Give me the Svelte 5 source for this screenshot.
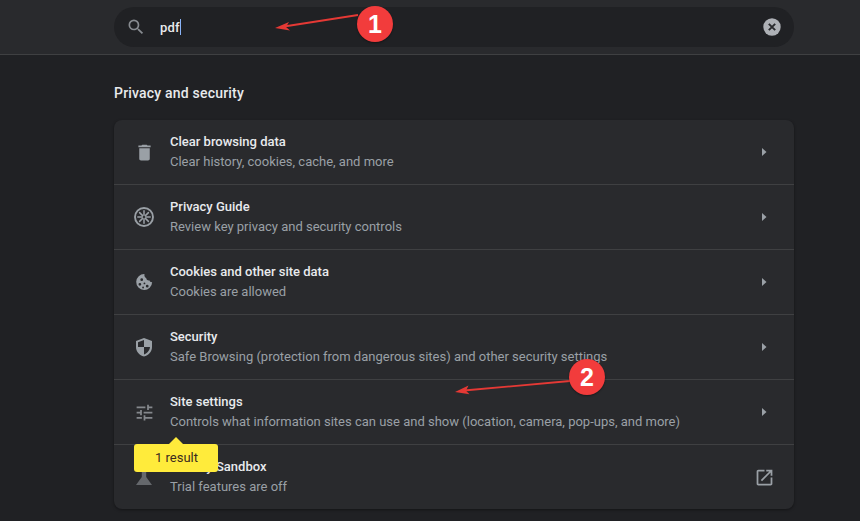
<script>
  const rows = [
    { icon: 'trash', title: 'Clear browsing data', sub: 'Clear history, cookies, cache, and more' },
    { icon: 'guide', title: 'Privacy Guide', sub: 'Review key privacy and security controls' },
    { icon: 'cookie', title: 'Cookies and other site data', sub: 'Cookies are allowed' },
    { icon: 'shield', title: 'Security', sub: 'Safe Browsing (protection from dangerous sites) and other security settings' },
    { icon: 'tune', title: 'Site settings', sub: 'Controls what information sites can use and show (location, camera, pop-ups, and more)' },
    { icon: 'flask', title: 'Privacy Sandbox', sub: 'Trial features are off', external: true }
  ];
</script>

<div class="page">
  <header class="top">
    <div class="search">
      <svg class="search-icon" viewBox="0 0 24 24" width="20" height="20">
        <path fill="#878b90" d="M15.5 14h-.79l-.28-.27A6.47 6.47 0 0 0 16 9.5 6.5 6.5 0 1 0 9.5 16c1.61 0 3.09-.59 4.23-1.57l.27.28v.79l5 4.99L20.49 19l-4.99-5zm-6 0C7.01 14 5 11.99 5 9.5S7.01 5 9.5 5 14 7.01 14 9.5 11.99 14 9.5 14z"/>
      </svg>
      <span class="query">pdf</span><span class="caret"></span>
      <svg class="clear" viewBox="0 0 18 18" width="18" height="18">
        <circle cx="9" cy="9" r="8.700" fill="#aeb1b6"/>
        <path d="M5.800 5.800l6.400 6.400M12.200 5.800l-6.400 6.400" stroke="#292a2d" stroke-width="1.900"/>
      </svg>
    </div>
  </header>

  <main class="content">
    <h2>Privacy and security</h2>
    <section class="card">
      {#each rows as row}
        <div class="row">
          <div class="icon">
            {#if row.icon === 'trash'}
              <svg viewBox="0 0 24 24" width="21" height="21"><path fill="#9aa0a6" d="M6 19c0 1.100.9 2 2 2h8c1.100 0 2-.9 2-2V7H6v12zM19 4h-3.500l-1-1h-5l-1 1H5v2h14V4z"/></svg>
            {:else if row.icon === 'guide'}
              <svg viewBox="0 0 24 24" width="24" height="24">
                <circle cx="12" cy="12" r="9" fill="none" stroke="#9aa0a6" stroke-width="1.900"/>
                <path stroke="#9aa0a6" stroke-width="1.500" stroke-linecap="round" d="M12 5.800v4.200M12 14v4.200M5.800 12H10M14 12h4.200M7.600 7.600l3 3M13.400 13.400l3 3M16.400 7.600l-3 3M10.600 13.400l-3 3"/>
              </svg>
            {:else if row.icon === 'cookie'}
              <svg viewBox="0 0 24 24" width="22" height="22">
                <path fill="#9aa0a6" fill-rule="evenodd" d="M12.500 3.300a8.700 8.700 0 1 0 8.400 8.800c-1.600.4-2.700-.4-3.100-1.900-1.900.3-3.300-.8-3.400-2.600-1.500-.2-2.300-2.600-1.900-4.300zM9.500 8a1.500 1.500 0 1 1 0 3 1.500 1.500 0 0 1 0-3zM7.500 13a1.500 1.500 0 1 1 0 3 1.500 1.500 0 0 1 0-3zM12.500 12.500a1 1 0 1 1 0 2 1 1 0 0 1 0-2zM15.500 15a1.500 1.500 0 1 1 0 3 1.500 1.500 0 0 1 0-3zM11 17a1 1 0 1 1 0 2 1 1 0 0 1 0-2z"/>
              </svg>
            {:else if row.icon === 'shield'}
              <svg viewBox="0 0 24 24" width="24" height="24">
                <path fill="#9aa0a6" fill-rule="evenodd" d="M12 3l-8 3v6c0 4.600 3.400 8.300 8 9.500 4.600-1.200 8-4.900 8-9.500V6l-8-3zm0 9h6c-.3 3.400-2.700 6.300-6 7.400V12H6V7.300l6-2.200V12z"/>
              </svg>
            {:else if row.icon === 'tune'}
              <svg viewBox="0 0 24 24" width="21" height="21"><path fill="#85888d" d="M3 17v2h6v-2H3zM3 5v2h10V5H3zm10 16v-2h8v-2h-8v-2h-2v6h2zM7 9v2H3v2h4v2h2V9H7zm14 4v-2H11v2h10zm-6-4h2V7h4V5h-4V3h-2v6z"/></svg>
            {:else}
              <svg viewBox="0 0 24 24" width="24" height="24"><path fill="#65686c" d="M9.800 5h4.400v7L20 20H4l5.800-8z"/></svg>
            {/if}
          </div>
          <div class="text">
            <div class="title">{row.title}</div>
            <div class="sub">{row.sub}</div>
          </div>
          <div class="end">
            {#if row.external}
              <svg viewBox="0 0 24 24" width="21" height="21"><path fill="#9aa0a6" d="M19 19H5V5h7V3H5c-1.110 0-2 .9-2 2v14c0 1.100.89 2 2 2h14c1.100 0 2-.9 2-2v-7h-2v7zM14 3v2h3.590l-9.830 9.830 1.410 1.410L19 6.410V10h2V3h-7z"/></svg>
            {:else}
              <svg viewBox="0 0 24 24" width="24" height="24"><path fill="#9aa0a6" d="M10 8l4.500 4-4.500 4z"/></svg>
            {/if}
          </div>
        </div>
      {/each}
    </section>
  </main>

  <div class="bubble">1 result</div>

  <svg class="marks" width="860" height="521" viewBox="0 0 860 521">
    <path d="M358 15L284 26.500" stroke="#e53935" stroke-width="1.800"/>
    <path d="M275 28l14-6-3 5 4 3.500z" fill="#e53935"/>
    <path d="M570 381L464 390.500" stroke="#e53935" stroke-width="1.800"/>
    <path d="M455 392l13.500-6.500-2.500 5.200 3.500 3.600z" fill="#e53935"/>
  </svg>
  <div class="num one">1</div>
  <div class="num two">2</div>
</div>

<style>
  :global(body) {
    margin: 0;
    background: #202124;
  }

  .page {
    position: relative;
    width: 860px;
    height: 521px;
    overflow: hidden;
    background: #202124;
    font-family: Roboto, "Liberation Sans", sans-serif;
    color: #e8eaed;
  }

  .top {
    box-sizing: border-box;
    height: 55px;
    padding: 7px 66px 0 114px;
    background: #292a2d;
    border-bottom: 1px solid #3f4042;
  }

  .search {
    display: flex;
    align-items: center;
    height: 40px;
    padding: 0 13px 0 12px;
    border-radius: 20px;
    background: #202124;
  }

  .search-icon {
    margin-right: 14px;
  }

  .query {
    font-size: 13px;
    font-weight: 500;
    letter-spacing: 0.2px;
  }

  .caret {
    width: 1px;
    height: 16px;
    background: #8ab4f8;
  }

  .clear {
    margin-left: auto;
  }

  .content {
    padding: 0 66px 0 114px;
  }

  h2 {
    margin: 0;
    padding: 30px 0 18px;
    font-size: 14px;
    line-height: 17px;
    font-weight: 500;
    letter-spacing: 0.2px;
    color: #e8eaed;
  }

  .card {
    border-radius: 8px;
    background: #292a2d;
    box-shadow: 0 1px 3px rgba(0, 0, 0, 0.4);
  }

  .row {
    box-sizing: border-box;
    display: flex;
    align-items: center;
    height: 65px;
    padding: 0 18px;
    border-top: 1px solid #3f4042;
  }

  .row:first-child {
    height: 64px;
    border-top: 0;
  }

  .icon,
  .end {
    display: flex;
    align-items: center;
    justify-content: center;
    width: 24px;
    height: 24px;
  }

  .icon {
    margin-right: 14px;
  }

  .text {
    flex: 1;
    font-size: 13px;
    line-height: 20px;
  }

  .title {
    font-weight: 500;
    color: #e8eaed;
  }

  .sub {
    color: #9aa0a6;
  }

  .bubble {
    position: absolute;
    left: 134px;
    top: 444px;
    width: 84px;
    height: 28px;
    padding-left: 21px;
    box-sizing: border-box;
    border-radius: 3px;
    background: #ffeb3b;
    color: #3c2a20;
    font-size: 13px;
    line-height: 28px;
  }

  .bubble::before {
    content: "";
    position: absolute;
    left: 35px;
    top: -7px;
    border-left: 7px solid transparent;
    border-right: 7px solid transparent;
    border-bottom: 7px solid #ffeb3b;
  }

  .marks {
    position: absolute;
    left: 0;
    top: 0;
  }

  .num {
    position: absolute;
    width: 36px;
    height: 36px;
    border-radius: 50%;
    background: #f23c3c;
    box-shadow: 0 1px 2px rgba(0, 0, 0, 0.4);
    color: #fff;
    font-family: "Liberation Sans", sans-serif;
    font-size: 25px;
    font-weight: 700;
    line-height: 36px;
    text-align: center;
  }

  .one {
    left: 357px;
    top: 6px;
  }

  .two {
    left: 569px;
    top: 359px;
  }
</style>
